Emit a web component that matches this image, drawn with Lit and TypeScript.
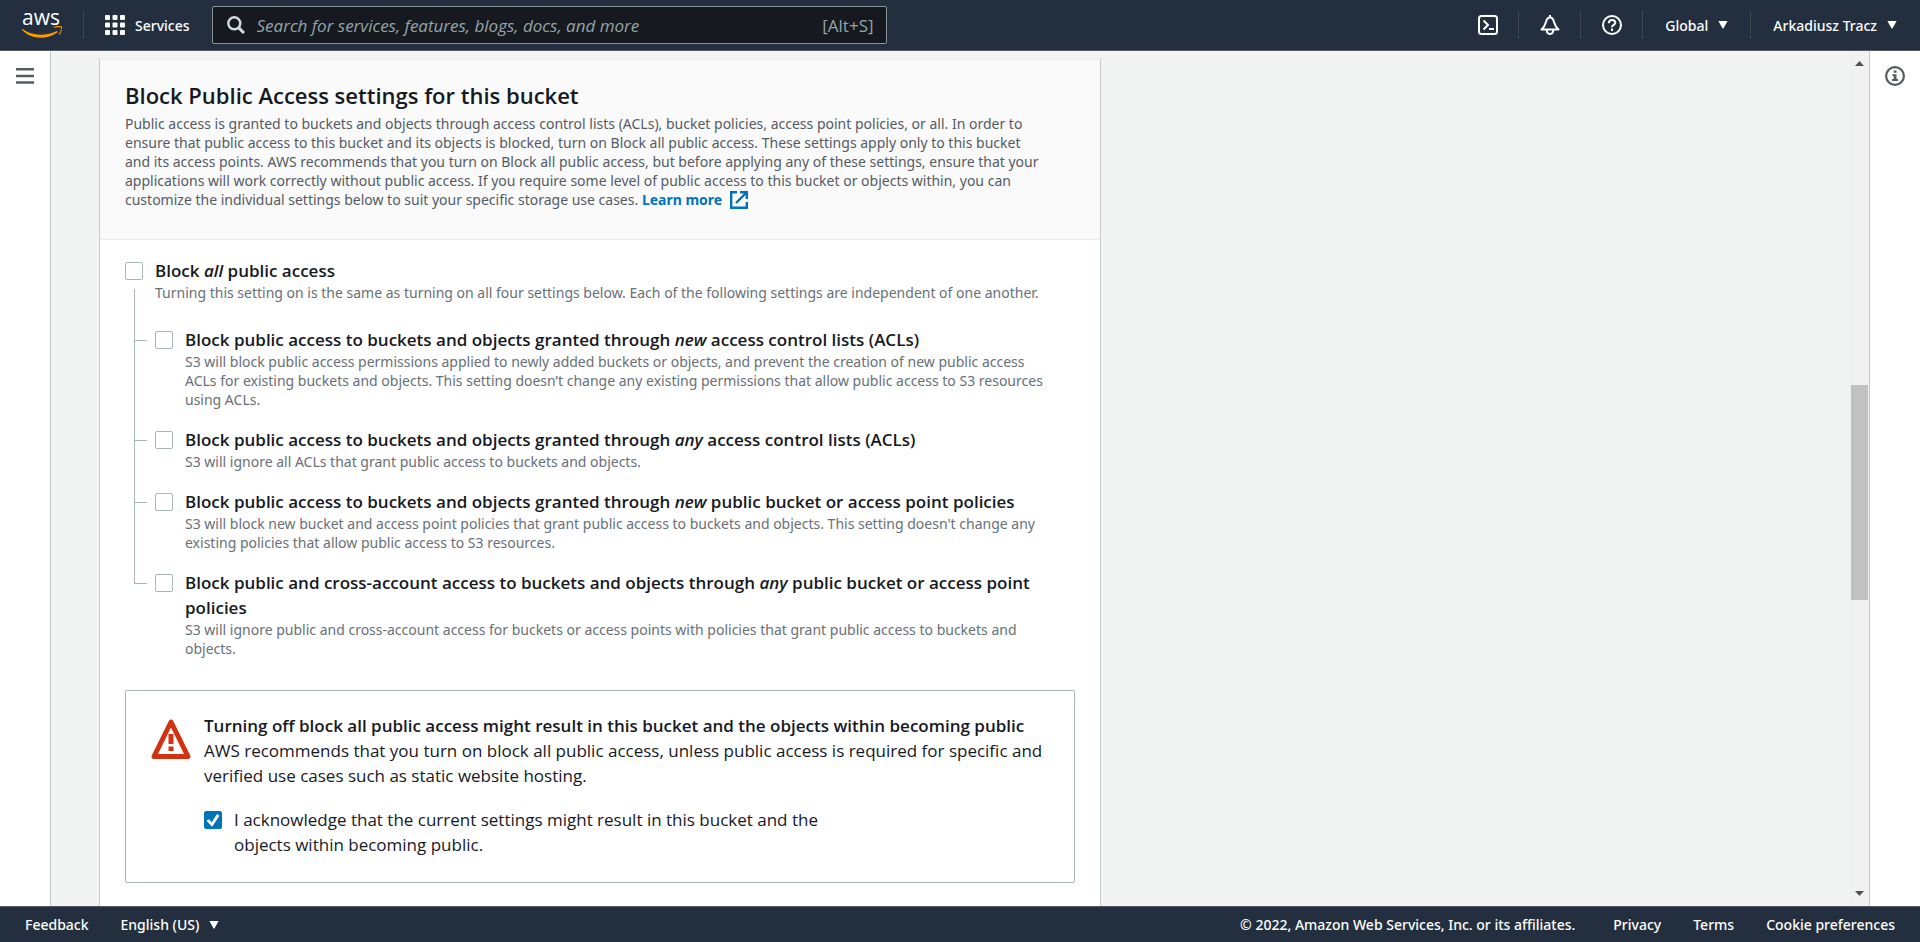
import { LitElement, html, css, svg, TemplateResult } from "lit";
import { customElement, property, state } from "lit/decorators.js";

interface Setting {
  id: string;
  label: TemplateResult;
  detail: string;
}

const SETTINGS: Setting[] = [
  {
    id: "new-acls",
    label: html`Block public access to buckets and objects granted through <em>new</em> access control lists (ACLs)`,
    detail:
      "S3 will block public access permissions applied to newly added buckets or objects, and prevent the creation of new public access ACLs for existing buckets and objects. This setting doesn’t change any existing permissions that allow public access to S3 resources using ACLs.",
  },
  {
    id: "any-acls",
    label: html`Block public access to buckets and objects granted through <em>any</em> access control lists (ACLs)`,
    detail: "S3 will ignore all ACLs that grant public access to buckets and objects.",
  },
  {
    id: "new-policies",
    label: html`Block public access to buckets and objects granted through <em>new</em> public bucket or access point policies`,
    detail:
      "S3 will block new bucket and access point policies that grant public access to buckets and objects. This setting doesn't change any existing policies that allow public access to S3 resources.",
  },
  {
    id: "any-policies",
    label: html`Block public and cross-account access to buckets and objects through <em>any</em> public bucket or access point policies`,
    detail:
      "S3 will ignore public and cross-account access for buckets or access points with policies that grant public access to buckets and objects.",
  },
];

const caret = html`<svg class="caret" viewBox="0 0 10 8" aria-hidden="true">
  <path d="M.4 0h9.2L5.4 7.6h-.8z" fill="currentColor" />
</svg>`;

const base = css`
  *,
  *::before {
    box-sizing: border-box;
  }
  button {
    font: inherit;
    color: inherit;
    background: none;
    border: 0;
    padding: 0;
    margin: 0;
    cursor: pointer;
  }
  svg {
    display: block;
    flex: none;
  }
  .caret {
    width: 10px;
    height: 8px;
  }
`;

@customElement("console-header")
export class ConsoleHeader extends LitElement {
  static styles = [
    base,
    css`
      :host {
        display: flex;
        align-items: center;
        height: 51px;
        background: #232f3e;
        border-bottom: 1px solid #545b64;
        color: #fff;
        font-family: "Noto Sans", "Open Sans", sans-serif;
        font-size: 14px;
        font-weight: 500;
      }
      .logo {
        display: block;
        margin: 0 20px 0 21px;
      }
      .logo svg {
        width: 42px;
        height: 44px;
      }
      .wordmark {
        font-family: "Open Sans", "Noto Sans", sans-serif;
        font-size: 21px;
        font-weight: 500;
      }
      .rule {
        width: 1px;
        height: 28px;
        background: #414750;
      }
      .services {
        display: flex;
        align-items: center;
        gap: 10px;
        margin: 0 22px 0 21px;
      }
      .services svg,
      .tool svg {
        width: 20px;
        height: 20px;
      }
      .search {
        flex: 0 1 675px;
        display: flex;
        align-items: center;
        gap: 12px;
        height: 38px;
        padding: 0 12px 0 14px;
        background: #16191f;
        border: 1px solid #879596;
        border-radius: 2px;
        font-family: "Open Sans", "Noto Sans", sans-serif;
        font-size: 17px;
        font-weight: 400;
        color: #95a5a6;
      }
      .search svg {
        width: 18px;
        height: 18px;
        color: #d5dbdb;
      }
      .search input {
        flex: 1;
        min-width: 0;
        padding: 0;
        border: 0;
        outline: 0;
        background: none;
        font: inherit;
        color: #fff;
      }
      .search input::placeholder {
        color: #95a5a6;
        font-style: italic;
        opacity: 1;
      }
      .right {
        display: flex;
        align-items: center;
        margin-left: auto;
        padding-right: 23px;
      }
      .tool {
        margin: 0 20px 0 21px;
      }
      .menu {
        display: flex;
        align-items: center;
        gap: 10px;
        margin: 0 22px;
      }
      .menu:last-child {
        margin-right: 0;
      }
    `,
  ];

  render() {
    const cells = [0, 7.5, 15];
    return html`
      <a class="logo" href="#" aria-label="AWS home">
        <svg viewBox="0 -8 42 44">
          <text class="wordmark" x="1" y="14" fill="#fff">aws</text>
          <path
            d="M1.600 18.100c5 3.600 11.400 5.700 17.700 5.700 5.300 0 11.100-1.200 16.200-3.600.9-.4 1.600.6.800 1.200-4.500 3.500-11.200 5.300-16.900 5.300-7.100 0-13.500-2.700-18.300-7.700-.4-.5 0-1.200.5-.9z"
            fill="#ff9900"
          />
          <path
            d="M40.300 17c-.9-1.100-5.700-.6-7.600-.3-.4 0-.6-.4-.1-.7 2.500-1.500 7.600-1.200 8.300-.5.7.8-.3 6.100-2.500 8.200-.4.4-.8.2-.6-.3.7-1.800 3-5.100 2.500-6.400z"
            fill="#ff9900"
          />
        </svg>
      </a>
      <span class="rule"></span>
      <button class="services">
        <svg viewBox="0 0 20 20" aria-hidden="true">
          ${cells.map((y) => cells.map((x) => svg`<rect x=${x} y=${y} width="5" height="5" rx="1" fill="#fff" />`))}
        </svg>
        Services
      </button>
      <label class="search">
        <svg viewBox="0 0 18 18" fill="none" stroke="currentColor" stroke-width="2.400" aria-hidden="true">
          <circle cx="7.300" cy="7.300" r="6" />
          <path d="M11.600 11.600l5.400 5.400" stroke-width="3" />
        </svg>
        <input type="search" aria-label="Search" placeholder="Search for services, features, blogs, docs, and more" />
        <span>[Alt+S]</span>
      </label>
      <div class="right">
        <button class="tool" aria-label="CloudShell">
          <svg viewBox="0 0 20 20" fill="none" stroke="#fff" stroke-width="2" aria-hidden="true">
            <rect x="1" y="1" width="18" height="18" rx="2.500" />
            <path d="M5.500 5.500l4.500 4.500-4.500 4.500M11 14h5" />
          </svg>
        </button>
        <span class="rule"></span>
        <button class="tool" aria-label="Notifications">
          <svg viewBox="0 0 20 20" fill="none" stroke="#fff" stroke-width="2" stroke-linejoin="round" aria-hidden="true">
            <path d="M10 0v2.500M1.500 14.500h17c-3-2.500-3.500-4-4.500-7.500-.6-2.900-1.800-4.500-4-4.500S6.600 4.100 6 7c-1 3.500-1.500 5-4.500 7.500z" />
            <path d="M6.800 15c0 5.200 6.400 5.200 6.400 0" />
          </svg>
        </button>
        <span class="rule"></span>
        <button class="tool" aria-label="Help">
          <svg viewBox="0 0 20 20" fill="none" stroke="#fff" stroke-width="2" aria-hidden="true">
            <circle cx="10" cy="10" r="9" />
            <path d="M6.800 8.200c0-4.300 6.500-4.300 6.500-.4 0 2.200-3.300 2-3.300 4.500M10 13.600v2.300" />
          </svg>
        </button>
        <span class="rule"></span>
        <button class="menu">Global ${caret}</button>
        <span class="rule"></span>
        <button class="menu">Arkadiusz Tracz ${caret}</button>
      </div>
    `;
  }
}

@customElement("console-footer")
export class ConsoleFooter extends LitElement {
  static styles = [
    base,
    css`
      :host {
        display: flex;
        align-items: center;
        justify-content: space-between;
        height: 36px;
        padding: 0 25px;
        background: #232f3e;
        border-top: 1px solid #545b64;
        color: #fff;
        font-family: "Noto Sans", "Open Sans", sans-serif;
        font-size: 14px;
        font-weight: 500;
      }
      .group {
        display: flex;
        align-items: center;
        gap: 32px;
      }
      .language {
        display: flex;
        align-items: center;
        gap: 10px;
      }
      .legal {
        margin-right: 6px;
      }
      a {
        color: inherit;
        text-decoration: none;
      }
    `,
  ];

  render() {
    return html`
      <div class="group">
        <button>Feedback</button>
        <button class="language">English (US) ${caret}</button>
      </div>
      <div class="group">
        <span class="legal">© 2022, Amazon Web Services, Inc. or its affiliates.</span>
        <a href="#">Privacy</a>
        <a href="#">Terms</a>
        <a href="#">Cookie preferences</a>
      </div>
    `;
  }
}

@customElement("check-option")
export class CheckOption extends LitElement {
  @property({ attribute: false }) label: TemplateResult | string = "";
  @property() detail = "";
  @property({ type: Boolean }) checked = false;
  @property({ type: Boolean }) plain = false;

  static styles = [
    base,
    css`
      :host {
        display: grid;
        grid-template-columns: 18px 1fr;
        column-gap: 12px;
        line-height: 25px;
        font-size: 17px;
      }
      input {
        appearance: none;
        width: 18px;
        height: 18px;
        margin: 4px 0 0;
        border: 1px solid #aab7b8;
        border-radius: 2px;
        background: #fff;
      }
      input:checked {
        background: #0073bb;
        border-color: #0073bb;
      }
      input:checked::before {
        content: "";
        display: block;
        width: 16px;
        height: 16px;
        background: #fff;
        clip-path: polygon(9% 55%, 24% 45%, 42% 64%, 75% 12%, 90% 23%, 45% 92%);
      }
      label {
        display: block;
        font-weight: 600;
        color: #16191f;
      }
      .plain {
        font-weight: 400;
      }
      p {
        max-width: var(--detail-width, none);
        margin: 0;
        font-family: "Noto Sans", "Open Sans", sans-serif;
        font-size: 14px;
        line-height: 19px;
        color: #687078;
      }
    `,
  ];

  render() {
    return html`
      <input
        id="box"
        type="checkbox"
        .checked=${this.checked}
        @change=${(e: Event) => (this.checked = (e.target as HTMLInputElement).checked)}
      />
      <div>
        <label for="box" class=${this.plain ? "plain" : ""}>${this.label}</label>
        ${this.detail ? html`<p>${this.detail}</p>` : ""}
      </div>
    `;
  }
}

@customElement("app-root")
export class AppRoot extends LitElement {
  @state() private acknowledged = true;

  static styles = [
    base,
    css`
      :host {
        display: grid;
        grid-template-rows: auto minmax(0, 1fr) auto;
        height: 100vh;
        overflow: hidden;
        font-family: "Open Sans", "Noto Sans", sans-serif;
        font-size: 17px;
        line-height: 25px;
        color: #16191f;
        background: #f2f3f3;
      }
      .body {
        display: flex;
        min-height: 0;
      }
      .rail {
        flex: none;
        width: 51px;
        padding-top: 15px;
        background: #fff;
        color: #545b64;
      }
      .rail button {
        display: block;
        margin: 0 auto;
      }
      .rail svg {
        width: 20px;
        height: 20px;
      }
      .nav {
        border-right: 1px solid #c3c8c8;
      }
      .info {
        border-left: 1px solid #c3c8c8;
      }
      main {
        flex: 1;
        min-width: 0;
        overflow: hidden;
        padding: 8px 48px 0;
      }
      .card {
        max-width: 1002px;
        background: #fff;
        border: 1px solid #c8cccc;
        border-top-color: #eaeded;
      }
      .card > header {
        padding: 21px 25px 30px;
        background: #fafafa;
        border-bottom: 1px solid #eaeded;
      }
      h2 {
        margin: 0;
        font-size: 22px;
        font-weight: 600;
        line-height: 28px;
      }
      .intro {
        max-width: 922px;
        margin: 5px 0 0;
        font-family: "Noto Sans", "Open Sans", sans-serif;
        font-size: 14px;
        line-height: 19px;
        color: #545b64;
      }
      .intro a {
        color: #0073bb;
        font-weight: 700;
        text-decoration: none;
      }
      .intro svg {
        display: inline-block;
        width: 18px;
        height: 18px;
        margin-left: 4px;
        vertical-align: -4px;
      }
      .content {
        padding: 18px 25px 60px;
      }
      .tree {
        --detail-width: 868px;
        margin: 0 0 0 9px;
        padding: 0;
        list-style: none;
      }
      .stem {
        height: 38px;
        margin: -13px 0 0 9px;
        border-left: 1px solid #aab7b8;
      }
      .tree li {
        display: grid;
        grid-template-columns: 12px 1fr;
        column-gap: 8px;
        padding-bottom: 18px;
        border-left: 1px solid #aab7b8;
      }
      .tree li::before {
        content: "";
        height: 14px;
        border-bottom: 1px solid #aab7b8;
      }
      .tree li:last-child {
        border-left-color: transparent;
      }
      .tree li:last-child::before {
        margin-left: -1px;
        border-left: 1px solid #aab7b8;
      }
      .warning {
        display: grid;
        grid-template-columns: 40px 1fr;
        column-gap: 13px;
        margin-top: 14px;
        padding: 22px 12px 25px 25px;
        border: 1px solid #aab7b8;
        border-radius: 2px;
      }
      .warning > svg {
        width: 40px;
        height: 40px;
        margin-top: 6px;
      }
      .warning p {
        margin: 0;
      }
      .warning strong {
        font-weight: 600;
      }
      .warning check-option {
        max-width: 640px;
        margin: 19px 0 0;
      }
      .scrollbar {
        flex: none;
        display: flex;
        flex-direction: column;
        align-items: center;
        width: 19px;
        padding: 10px 0;
        background: #f1f1f1;
      }
      .scrollbar svg {
        width: 9px;
        height: 5px;
      }
      .track {
        flex: 1;
        display: grid;
        grid-template-rows: 319fr 215fr 291fr;
        width: 17px;
      }
      .thumb {
        grid-row: 2;
        background: #c1c1c1;
      }
    `,
  ];

  render() {
    return html`
      <console-header></console-header>
      <div class="body">
        <nav class="rail nav">
          <button aria-label="Open navigation">
            <svg viewBox="0 0 20 20" aria-hidden="true">
              <path d="M1 3.200h18M1 10h18M1 16.500h18" stroke="currentColor" stroke-width="2.400" />
            </svg>
          </button>
        </nav>
        <main>
          <section class="card">
            <header>
              <h2>Block Public Access settings for this bucket</h2>
              <p class="intro">
                Public access is granted to buckets and objects through access control lists (ACLs), bucket policies,
                access point policies, or all. In order to ensure that public access to this bucket and its objects is
                blocked, turn on Block all public access. These settings apply only to this bucket and its access
                points. AWS recommends that you turn on Block all public access, but before applying any of these
                settings, ensure that your applications will work correctly without public access. If you require some
                level of public access to this bucket or objects within, you can customize the individual settings below
                to suit your specific storage use cases.
                <a href="#"
                  >Learn more
                  <svg viewBox="0 0 18 18" fill="none" stroke="currentColor" stroke-width="2.400" aria-hidden="true">
                    <path d="M7 1.200H1.200v15.600h15.600V11M10 1.200h6.800V8M16.500 1.500L6 12" /></svg
                ></a>
              </p>
            </header>
            <div class="content">
              <check-option
                .label=${html`Block <em>all</em> public access`}
                detail="Turning this setting on is the same as turning on all four settings below. Each of the following settings are independent of one another."
              ></check-option>
              <div class="stem"></div>
              <ul class="tree">
                ${SETTINGS.map(
                  (s) => html`<li><check-option id=${s.id} .label=${s.label} detail=${s.detail}></check-option></li>`,
                )}
              </ul>
              <div class="warning">
                <svg viewBox="0 0 40 40" aria-hidden="true">
                  <path
                    d="M20 3L37 37.500H3z"
                    fill="none"
                    stroke="#d13212"
                    stroke-width="5"
                    stroke-linejoin="round"
                  />
                  <path d="M20 15v10M20 27.500v4.500" stroke="#d13212" stroke-width="5" />
                </svg>
                <div>
                  <p><strong>Turning off block all public access might result in this bucket and the objects within becoming public</strong></p>
                  <p>
                    AWS recommends that you turn on block all public access, unless public access is required for
                    specific and verified use cases such as static website hosting.
                  </p>
                  <check-option
                    plain
                    ?checked=${this.acknowledged}
                    .label=${"I acknowledge that the current settings might result in this bucket and the objects within becoming public."}
                  ></check-option>
                </div>
              </div>
            </div>
          </section>
        </main>
        <div class="scrollbar" aria-hidden="true">
          <svg viewBox="0 0 9 5"><path d="M0 5L4.500 0 9 5z" fill="#505050" /></svg>
          <div class="track"><div class="thumb"></div></div>
          <svg viewBox="0 0 9 5"><path d="M0 0l4.500 5L9 0z" fill="#505050" /></svg>
        </div>
        <aside class="rail info">
          <button aria-label="Open help panel">
            <svg viewBox="0 0 20 20" aria-hidden="true">
              <circle cx="10" cy="10" r="8.900" fill="none" stroke="currentColor" stroke-width="2.200" />
              <path d="M8.700 4.500h2.800v2.300H8.700zM7.500 8.200h4v4.800h1.500v2H7v-2h1.700v-3H7.500z" fill="currentColor" />
            </svg>
          </button>
        </aside>
      </div>
      <console-footer></console-footer>
    `;
  }
}
